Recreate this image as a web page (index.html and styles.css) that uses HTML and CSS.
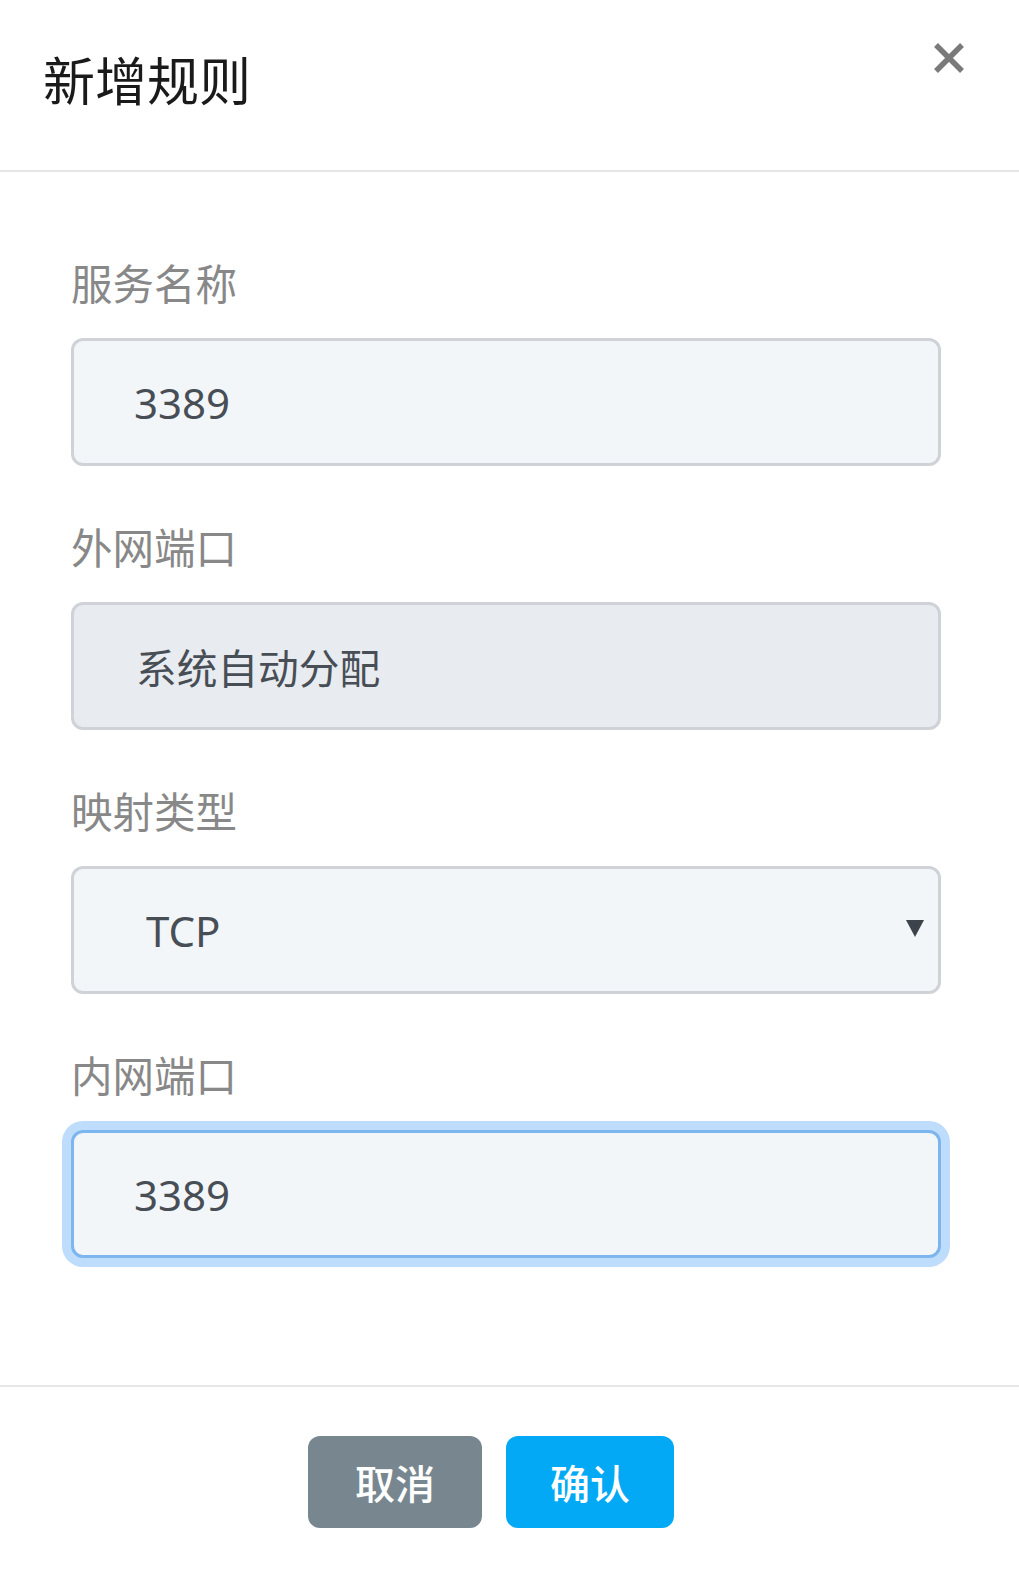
FILE: index.html
```html
<!DOCTYPE html>
<html lang="zh-CN">
<head>
<meta charset="utf-8">
<title>新增规则</title>
<link rel="stylesheet" href="styles.css">
</head>
<body>
<div class="dialog">
  <header class="dialog-header">
    <h1 class="dialog-title">新增规则</h1>
    <button class="close-btn" type="button" aria-label="关闭">
      <svg width="32" height="32" viewBox="0 0 32 32"><path d="M3 3 L29 29 M29 3 L3 29" stroke="#7a7a7a" stroke-width="5.5" stroke-linecap="butt"/></svg>
    </button>
  </header>
  <form class="dialog-body">
    <div class="field">
      <label class="field-label">服务名称</label>
      <input class="field-input" type="text" value="3389">
    </div>
    <div class="field">
      <label class="field-label">外网端口</label>
      <input class="field-input is-disabled" type="text" value="系统自动分配" disabled>
    </div>
    <div class="field">
      <label class="field-label">映射类型</label>
      <div class="select-wrap">
        <select class="field-input field-select">
          <option>TCP</option>
          <option>UDP</option>
        </select>
        <svg class="select-arrow" width="18" height="17" viewBox="0 0 18 17"><polygon points="0,0 18,0 9,17" fill="#3d434a"/></svg>
      </div>
    </div>
    <div class="field">
      <label class="field-label">内网端口</label>
      <input class="field-input is-focused" type="text" value="3389">
    </div>
  </form>
  <footer class="dialog-footer">
    <button class="btn btn-cancel" type="button">取消</button>
    <button class="btn btn-confirm" type="button">确认</button>
  </footer>
</div>
</body>
</html>
```
FILE: styles.css
```css
html, body {
  margin: 0;
  padding: 0;
  background: #ffffff;
}

body {
  font-family: "Noto Sans", "Noto Sans CJK SC", sans-serif;
}

.dialog {
  width: 1019px;
  min-height: 1575px;
  background: #ffffff;
  box-sizing: border-box;
}

.dialog-header {
  height: 172px;
  box-sizing: border-box;
  border-bottom: 2px solid #e6e6e6;
  display: flex;
  justify-content: space-between;
  align-items: flex-start;
  padding: 0 54px 0 43px;
}

.dialog-title {
  margin: 44px 0 0 0;
  font-family: "Noto Sans CJK SC", sans-serif;
  font-size: 52px;
  line-height: 70px;
  font-weight: 400;
  color: #1a1a1a;
}

.close-btn {
  margin-top: 42px;
  padding: 0;
  border: 0;
  background: transparent;
  width: 32px;
  height: 32px;
  display: block;
  cursor: pointer;
}

.close-btn svg {
  display: block;
}

.dialog-body {
  display: flex;
  flex-direction: column;
  gap: 55px;
  padding: 85px 78px 127px 71px;
  margin: 0;
}

.field {
  display: flex;
  flex-direction: column;
}

.field-label {
  font-family: "Noto Sans CJK SC", sans-serif;
  font-size: 41.5px;
  line-height: 50px;
  color: #888888;
  margin-bottom: 31px;
}

.field-input {
  display: block;
  width: 870px;
  height: 128px;
  box-sizing: border-box;
  border: 3px solid #cfd3d7;
  border-radius: 12px;
  background: #f3f6f9;
  padding: 0 0 0 60px;
  margin: 0;
  font-family: "Noto Sans", "Noto Sans CJK SC", sans-serif;
  font-size: 42px;
  color: #484e55;
  outline: none;
}

.field-input.is-disabled {
  background: #e8ebef;
  color: #484e55;
  -webkit-text-fill-color: #484e55;
  opacity: 1;
  padding-left: 62px;
  font-size: 40.7px;
}

.field-input.is-focused {
  border-color: #7db6ef;
  box-shadow: 0 0 0 9px #bedcfb;
}

.select-wrap {
  position: relative;
  width: 870px;
}

.field-select {
  -webkit-appearance: none;
  appearance: none;
  padding-left: 72px;
}

.select-arrow {
  position: absolute;
  right: 17px;
  top: 54px;
  pointer-events: none;
}

.dialog-footer {
  border-top: 2px solid #e6e6e6;
  display: flex;
  gap: 24px;
  padding: 49px 0 47px 308px;
}

.btn {
  height: 92px;
  border: 0;
  border-radius: 12px;
  color: #ffffff;
  font-family: "Noto Sans CJK SC", sans-serif;
  font-size: 40px;
  font-weight: 500;
  padding: 0;
  cursor: pointer;
}

.btn-cancel {
  width: 174px;
  background: #78878f;
}

.btn-confirm {
  width: 168px;
  background: #03a9f4;
}
```
